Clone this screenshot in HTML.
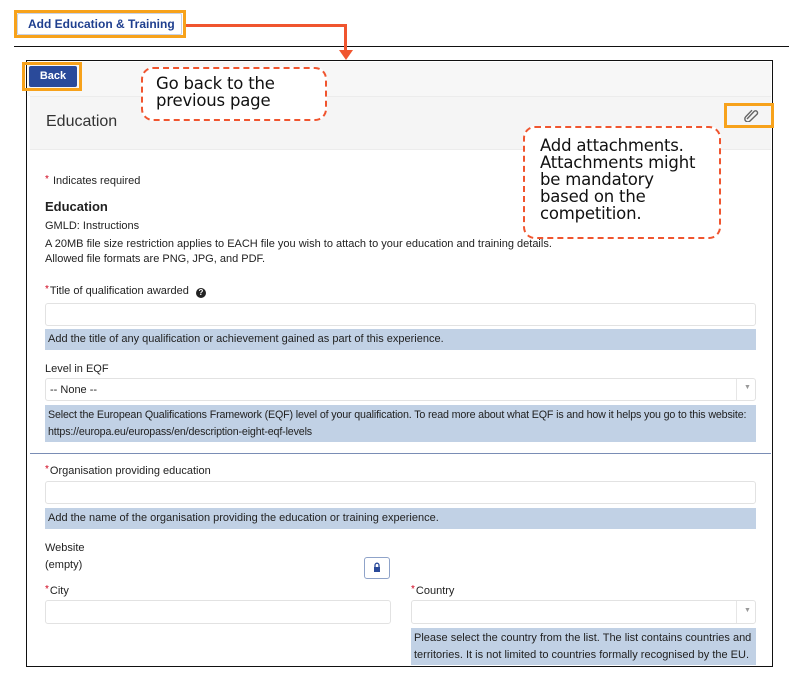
<!DOCTYPE html>
<html><head><meta charset="utf-8"><style>
*{margin:0;padding:0;box-sizing:border-box}
body{width:789px;height:680px;background:#fff;position:relative;overflow:hidden;font-family:"Liberation Sans",Arial,sans-serif;color:#222;font-size:11px}
.a{position:absolute}
.t{position:absolute;white-space:nowrap;font-size:11px;color:#222}
.req{color:#d0021b;font-size:10px;position:relative;top:-2px;margin-right:1px}
.inp{position:absolute;background:#fff;border:1px solid #e2e2e2;border-radius:3px}
.help{position:absolute;background:#c1d1e5;font-size:11px;color:#222;padding:4px 3px;line-height:17px}
.call{position:absolute;border:2.5px dashed #f0552f;border-radius:12px;background:#fff;font-size:16.5px;color:#111;line-height:17px;font-family:"DejaVu Sans","Liberation Sans",sans-serif;letter-spacing:-0.2px}
</style></head><body>
<div class="a" style="left:14px;top:10px;width:172px;height:28px;border:3px solid #f7a21b;background:#fff"></div>
<div class="a" style="left:17px;top:13px;width:165px;height:22px;border:1px solid #c8d2e6;border-radius:2px;background:#fff"></div>
<div class="t" style="left:28px;top:17px;font-size:12px;font-weight:bold;color:#1f3f8f">Add Education &amp; Training</div>
<div class="a" style="left:14px;top:46px;width:775px;height:1px;background:#111"></div>
<div class="a" style="left:186px;top:24px;width:161px;height:3px;background:#f0552f"></div>
<div class="a" style="left:344px;top:24px;width:3px;height:27px;background:#f0552f"></div>
<div class="a" style="left:339px;top:50px;width:0;height:0;border-left:7px solid transparent;border-right:7px solid transparent;border-top:10px solid #f0552f"></div>
<div class="a" style="left:26px;top:60px;width:747px;height:607px;border:1.5px solid #111;background:#fff"></div>
<div class="a" style="left:28px;top:62px;width:743px;height:34px;background:#f7f7f7"></div>
<div class="a" style="left:22px;top:62px;width:60px;height:29px;border:3px solid #f7a21b"></div>
<div class="a" style="left:29px;top:66px;width:48px;height:21px;background:#2a4a9a;border-radius:2px;color:#fff;font-weight:bold;font-size:11px;text-align:center;line-height:21px">Back</div>
<div class="a" style="left:30px;top:96px;width:741px;height:54px;background:#f5f5f5;border-top:1px solid #ececec;border-bottom:1px solid #ececec"></div>
<div class="t" style="left:46px;top:113px;font-size:16px;color:#333">Education</div>
<div class="a" style="left:724px;top:103px;width:50px;height:25px;border:3px solid #f7a21b"></div>
<svg class="a" style="left:743px;top:108px" width="16" height="14" viewBox="0 0 16 14"><path d="M4 11 L11 3.5 a2 2 0 0 1 3 2.8 L7 13 a3 3 0 0 1 -4.3 -4.2 L9 2.2" fill="none" stroke="#666" stroke-width="1.4"/></svg>
<div class="call" style="left:141px;top:67px;width:186px;height:54px;padding:6px 0 0 13px">Go back to the<br>previous page</div>
<div class="call" style="left:523px;top:126px;width:198px;height:113px;padding:9px 0 0 15px">Add attachments.<br>Attachments might<br>be mandatory<br>based on the<br>competition.</div>
<div class="t" style="left:45px;top:175px"><span class="req">*</span> Indicates required</div>
<div class="t" style="left:45px;top:199px;font-size:13px;font-weight:bold">Education</div>
<div class="t" style="left:45px;top:220px">GMLD: Instructions</div>
<div class="t" style="left:45px;top:238px">A 20MB file size restriction applies to EACH file you wish to attach to your education and training details.</div>
<div class="t" style="left:45px;top:253px">Allowed file formats are PNG, JPG, and PDF.</div>
<div class="t" style="left:45px;top:285px"><span class="req">*</span>Title of qualification awarded <span style="display:inline-block;width:10px;height:10px;border-radius:5px;background:#222;color:#fff;font-size:8px;line-height:10px;text-align:center;font-weight:bold;margin-left:4px;vertical-align:-1px">?</span></div>
<div class="inp" style="left:45px;top:303px;width:711px;height:23px"></div>
<div class="help" style="left:45px;top:329px;width:711px;height:21px;padding-top:2px">Add the title of any qualification or achievement gained as part of this experience.</div>
<div class="t" style="left:45px;top:363px">Level in EQF</div>
<div class="inp" style="left:45px;top:378px;width:711px;height:23px"></div>
<div class="t" style="left:50px;top:384px">-- None --</div>
<div class="a" style="left:736px;top:379px;width:1px;height:21px;background:#e6e6e6"></div>
<div class="t" style="left:744px;top:384px;font-size:7px;color:#999">▼</div>
<div class="help" style="left:45px;top:405px;width:711px;height:37px;padding-top:2px;white-space:nowrap;font-size:10.7px;letter-spacing:-0.15px">Select the European Qualifications Framework (EQF) level of your qualification. To read more about what EQF is and how it helps you go to this website:<br>https://europa.eu/europass/en/description-eight-eqf-levels</div>
<div class="a" style="left:30px;top:453px;width:741px;height:1px;background:#7a8db5"></div>
<div class="t" style="left:45px;top:465px"><span class="req">*</span>Organisation providing education</div>
<div class="inp" style="left:45px;top:481px;width:711px;height:23px"></div>
<div class="help" style="left:45px;top:508px;width:711px;height:21px;padding-top:2px">Add the name of the organisation providing the education or training experience.</div>
<div class="t" style="left:45px;top:542px">Website</div>
<div class="t" style="left:45px;top:559px">(empty)</div>
<div class="a" style="left:364px;top:557px;width:26px;height:22px;border:1px solid #8fa3c9;border-radius:3px;background:#fff"></div>
<svg class="a" style="left:373px;top:562px" width="8" height="11" viewBox="0 0 8 11"><path d="M2 5 V3.2 a2 2 0 0 1 4 0 V5" fill="none" stroke="#2a4a9a" stroke-width="1.3"/><rect x="1" y="5" width="6" height="5" fill="#2a4a9a"/></svg>
<div class="t" style="left:45px;top:585px"><span class="req">*</span>City</div>
<div class="inp" style="left:45px;top:600px;width:346px;height:24px"></div>
<div class="t" style="left:411px;top:585px"><span class="req">*</span>Country</div>
<div class="inp" style="left:411px;top:600px;width:345px;height:24px"></div>
<div class="a" style="left:736px;top:601px;width:1px;height:22px;background:#e6e6e6"></div>
<div class="t" style="left:744px;top:607px;font-size:7px;color:#999">▼</div>
<div class="help" style="left:411px;top:628px;width:345px;height:37px;padding:2px 3px">Please select the country from the list. The list contains countries and territories. It is not limited to countries formally recognised by the EU.</div>
</body></html>
